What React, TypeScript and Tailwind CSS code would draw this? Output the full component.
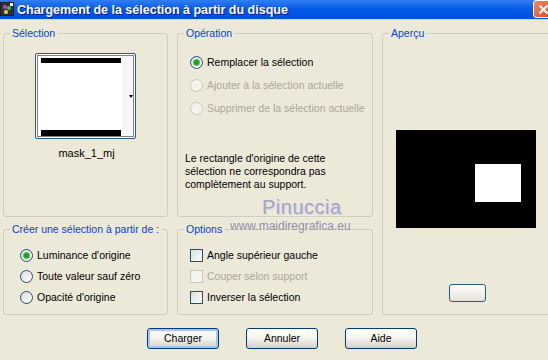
import React from "react";

type RadioProps = { checked?: boolean; disabled?: boolean };

const Radio: React.FC<RadioProps> = ({ checked = false, disabled = false }) => (
  <span
    className={`flex h-[13px] w-[13px] shrink-0 items-center justify-center rounded-full border ${
      disabled
        ? "border-[#cac8bb] bg-[#f4f3ee]"
        : "border-[#1c5180] bg-gradient-to-br from-[#dcdcd7] to-white"
    }`}
  >
    {checked && (
      <span className="h-[5px] w-[5px] rounded-full bg-[#21a121] shadow-[0_0_0_1px_#5bc05b]" />
    )}
  </span>
);

const Checkbox: React.FC<{ disabled?: boolean }> = ({ disabled = false }) => (
  <span
    className={`block h-[13px] w-[13px] shrink-0 border ${
      disabled
        ? "border-[#cac8bb] bg-[#f4f3ee]"
        : "border-[#1c5180] bg-gradient-to-br from-[#dcdcd7] to-white"
    }`}
  />
);

type GroupProps = {
  label: string;
  className?: string;
  outerClassName?: string;
  children?: React.ReactNode;
};

// padding goes on an inner div: a fieldset's padding would move its legend too
const Group: React.FC<GroupProps> = ({
  label,
  className = "",
  outerClassName = "",
  children,
}) => (
  <fieldset className={`min-w-0 rounded-[3px] border border-[#d0d0bf] ${outerClassName}`}>
    <legend className="ml-[6px] whitespace-nowrap px-[2px] text-[10.5px] leading-[13px] text-[#0046d5]">
      {label}
    </legend>
    <div className={className}>{children}</div>
  </fieldset>
);

const XpButton: React.FC<{ label: string; isDefault?: boolean }> = ({
  label,
  isDefault = false,
}) => (
  <button
    className={`h-[21px] w-[72px] rounded-[3px] border border-[#003c74] bg-gradient-to-b from-white via-[#f4f3ee] to-[#d6d0c5] text-[10.5px] text-black ${
      isDefault ? "shadow-[inset_0_0_0_2px_#a8c4f0]" : ""
    }`}
  >
    {label}
  </button>
);

const TitleBar = () => (
  <div className="flex h-[20px] items-center border-b border-[#cfd9ee] bg-gradient-to-b from-[#2f7ef2] via-[#0058e8] to-[#0050de]">
    {/* app icon */}
    <svg width="15" height="15" viewBox="0 0 15 15" className="mr-[2px]">
      <rect x="0" y="0" width="14" height="14" fill="#1b1b2a" />
      <rect x="1" y="1" width="12" height="12" fill="#2d3140" />
      <circle cx="5" cy="5" r="2" fill="#d83a8a" />
      <circle cx="9" cy="6" r="2" fill="#3fbf4a" />
      <circle cx="6" cy="10" r="2" fill="#e8d23a" />
      <rect x="10" y="1" width="3" height="3" fill="#ffffff" />
    </svg>
    <span className="whitespace-nowrap text-[12.5px] font-bold leading-[20px] text-white [text-shadow:1px_1px_#0a1a8a]">
      Chargement de la sélection à partir du disque
    </span>
    <div className="ml-auto mr-[-6px] flex h-[18px] w-[21px] items-center justify-center self-start rounded-[3px] border border-white bg-gradient-to-br from-[#f08a66] to-[#d8431c]">
      <svg width="11" height="11" viewBox="0 0 11 11">
        <path d="M1.5 1.5 L9.5 9.5 M9.5 1.5 L1.5 9.5" stroke="white" strokeWidth="2" />
      </svg>
    </div>
  </div>
);

export default function App() {
  return (
    <div className="relative h-[360px] w-[548px] overflow-hidden bg-[#ece9d8] font-['Liberation_Sans',Arial,sans-serif] text-[10.5px] leading-[13px] text-black">
      <TitleBar />

      <div className="grid w-[600px] grid-cols-[165px_196px_180px] grid-rows-[190px_92px] gap-x-[9px] gap-y-[6px] pl-[3px] pt-[7px]">
        {/* SELECTION */}
        <Group label="Sélection" className="flex flex-col items-center">
          <div className="mt-[13px] h-[86px] w-[101px] rounded-[2px] border border-[#2b5b8c] bg-white p-[1px]">
            <svg width="97" height="82" viewBox="0 0 97 82">
              <rect x="0.5" y="0.5" width="96" height="81" fill="#ffffff" stroke="#000" strokeDasharray="1 1" />
              <rect x="85" y="1" width="11" height="80" fill="#f7f7f7" />
              <rect x="4" y="3" width="80" height="5" fill="#000" />
              <rect x="4" y="75" width="80" height="6" fill="#000" />
              <path d="M92 40 L96 40 L94 43 Z" fill="#000" />
            </svg>
          </div>
          <div className="mt-[8px] pl-[2px] text-[11px]">mask_1_mj</div>
        </Group>

        {/* OPERATION */}
        <Group label="Opération" className="pl-[12px] pt-[16px]">
          <div className="flex flex-col gap-[10px] whitespace-nowrap">
            <label className="flex items-center gap-[4px]">
              <Radio checked />
              Remplacer la sélection
            </label>
            <label className="flex items-center gap-[4px] text-[#aca899]">
              <Radio disabled />
              Ajouter à la sélection actuelle
            </label>
            <label className="flex items-center gap-[4px] text-[#aca899]">
              <Radio disabled />
              Supprimer de la sélection actuelle
            </label>
          </div>
          <p className="-ml-[5px] mt-[37px] whitespace-nowrap">
            Le rectangle d'origine de cette
            <br />
            sélection ne correspondra pas
            <br />
            complètement au support.
          </p>
        </Group>

        {/* APERCU - runs past the right edge of the shot */}
        <Group
          label="Aperçu"
          outerClassName="row-span-2 w-[180px]"
          className="flex flex-col items-start pl-[13px]"
        >
          <svg width="140" height="98" viewBox="0 0 140 98" className="mt-[90px]">
            <rect width="140" height="98" fill="#000" />
            <rect x="79" y="34" width="46" height="38" fill="#fff" />
          </svg>
          <button className="ml-[53px] mt-[56px] h-[18px] w-[37px] rounded-[3px] border border-[#2b5b8c] bg-gradient-to-b from-white to-[#e4e2da]" />
        </Group>

        {/* CREER */}
        <Group label="Créer une sélection à partir de :" className="pl-[16px] pt-[13px]">
          <div className="flex flex-col gap-[8px] whitespace-nowrap">
            <label className="flex items-center gap-[4px]">
              <Radio checked />
              Luminance d'origine
            </label>
            <label className="flex items-center gap-[4px]">
              <Radio />
              Toute valeur sauf zéro
            </label>
            <label className="flex items-center gap-[4px]">
              <Radio />
              Opacité d'origine
            </label>
          </div>
        </Group>

        {/* OPTIONS */}
        <Group label="Options" className="pl-[12px] pt-[13px]">
          <div className="flex flex-col gap-[8px] whitespace-nowrap">
            <label className="flex items-center gap-[4px]">
              <Checkbox />
              Angle supérieur gauche
            </label>
            <label className="flex items-center gap-[4px] text-[#aca899]">
              <Checkbox disabled />
              Couper selon support
            </label>
            <label className="flex items-center gap-[4px]">
              <Checkbox />
              Inverser la sélection
            </label>
          </div>
        </Group>
      </div>

      {/* BUTTONS */}
      <div className="mt-[13px] flex gap-[27px] pl-[147px]">
        <XpButton label="Charger" isDefault />
        <XpButton label="Annuler" />
        <XpButton label="Aide" />
      </div>

      {/* WATERMARK */}
      <div className="pointer-events-none absolute left-[262px] top-[197px] whitespace-nowrap text-[20px] leading-[20px] tracking-[0.5px] text-[#a4a4c6] [text-shadow:1px_1px_#d8d8e8]">
        Pinuccia
      </div>
      <div className="pointer-events-none absolute left-[230px] top-[219px] whitespace-nowrap text-[12px] leading-[14px] text-[#9090ae]">
        www.maidiregrafica.eu
      </div>
    </div>
  );
}
